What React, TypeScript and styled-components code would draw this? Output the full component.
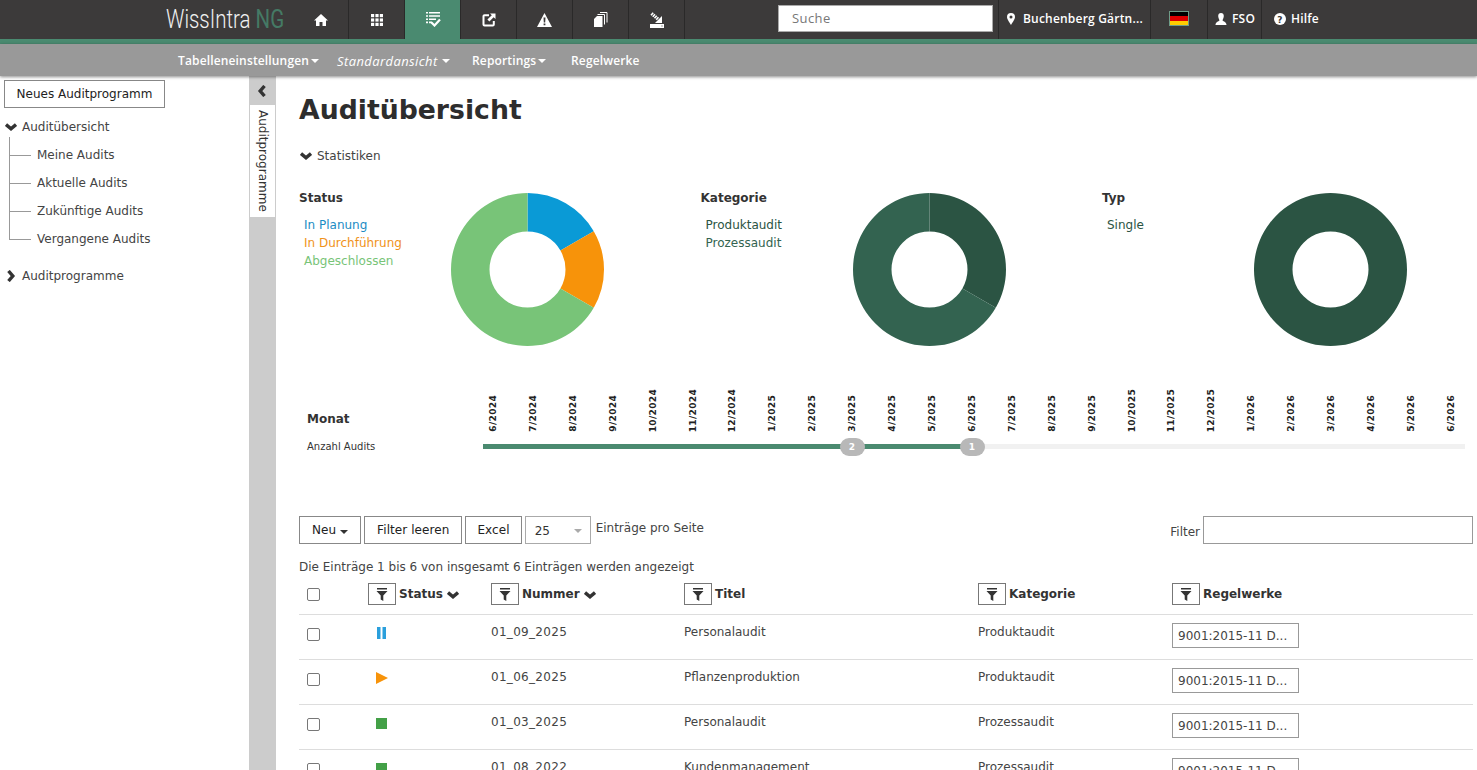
import React from "react";
import styled, { createGlobalStyle } from "styled-components";

const Global = createGlobalStyle`
  html, body { margin: 0; padding: 0; height: 100%; overflow: hidden; background: #fff; }
  body { font-family: "DejaVu Sans", Verdana, sans-serif; font-size: 12px; color: #333; }
  * { box-sizing: border-box; }
`;

const Page = styled.div`display: flex; flex-direction: column; height: 770px; overflow: hidden;`;
const TopBar = styled.header`
  flex: none; height: 44px; display: flex; background: #3c3a3a; border-bottom: 5px solid #4a8a70; padding-left: 166px;
`;
const Logo = styled.div`
  width: 127px; font-family: Roboto, sans-serif; font-weight: 300; font-size: 25px; line-height: 39px; color: #f0f0f0; white-space: nowrap;
`;
const LogoText = styled.span`
  display: inline-block; transform: scaleX(0.82); transform-origin: left center;
  span { color: #457a65; font-weight: 400; }
`;
const NavCell = styled.div<{ $active?: boolean }>`
  width: 56px; display: flex; align-items: center; justify-content: center;
  border-right: 1px solid #2a2929; color: #fff;
  background: ${(p) => (p.$active ? "#4a8a70" : "transparent")};
`;
const Spacer = styled.div`width: 93px;`;
const Search = styled.input`
  width: 215px; height: 27px; margin: 5px 5px 0 0; padding: 0 13px 2px; border: 1px solid #aaa; background: #fff;
  font: 13px "Open Sans", sans-serif; letter-spacing: .4px; outline: none;
  &::placeholder { color: #777; opacity: 1; }
`;
const MetaCell = styled.div<{ $w: number; $pad?: number; $gap?: number }>`
  width: ${(p) => p.$w}px; display: flex; align-items: center; gap: ${(p) => p.$gap ?? 5}px; padding: 0 0 2px ${(p) => p.$pad ?? 8}px;
  border-left: 1px solid #2a2929; color: #fff; font: 600 12px "Open Sans", sans-serif; letter-spacing: .2px; white-space: nowrap;
`;
const Flag = styled.div`
  width: 20px; height: 15px; margin-left: 10px; border: 1px solid #6f9c88;
  background: linear-gradient(#000 0 33%, #d00 33% 66%, #fc0 66%);
`;
const SubBar = styled.nav`
  flex: none; height: 32px; background: #999; display: flex; align-items: center; padding: 1px 0 0 178px;
  color: #fff; font: 600 12px "Open Sans", sans-serif; letter-spacing: .15px; box-shadow: 0 1px 3px rgba(0,0,0,.45); position: relative; z-index: 2;
`;
const SubItem = styled.span<{ $w: number }>`
  width: ${(p) => p.$w}px; white-space: nowrap; display: flex; align-items: center;
`;
const SubItemItalic = styled(SubItem)`
  font-style: italic; font-weight: 400; font-size: 13px; letter-spacing: .4px;
`;
const Caret = styled.i<{ $c?: string; $gap?: number }>`
  display: inline-block; margin-left: ${(p) => p.$gap ?? 2}px; width: 0; height: 0;
  border-left: 4px solid transparent; border-right: 4px solid transparent; border-top: 4px solid ${(p) => p.$c ?? "#fff"};
`;
const Body = styled.div`flex: 1; display: flex; min-height: 0;`;
const Sidebar = styled.aside`width: 249px; flex: none; padding: 4px;`;
const Btn = styled.button`
  height: 28px; padding: 0 12px 1px; border: 1px solid #888; background: #fff; color: #222;
  font: 12px "DejaVu Sans", sans-serif; letter-spacing: .08px; white-space: nowrap;
`;
const TightBtn = styled(Btn)`padding: 0 11px 1px;`;
const NewBtn = styled(Btn)`width: 161px; padding: 0 0 1px; letter-spacing: 0;`;
const TreeHead = styled.div<{ $mt: number }>`
  margin-top: ${(p) => p.$mt}px; height: 20px; display: flex; align-items: center; gap: 5px; padding-left: 1px; color: #444;
`;
const TreeList = styled.ul`
  list-style: none; margin: 0 0 0 5px; padding: 4px 0 0;
  background: linear-gradient(#999,#999) left top / 1px 5px no-repeat;
`;
const TreeItem = styled.li<{ $last?: boolean }>`
  height: 28px; line-height: 28px; padding-left: 28px; color: #444;
  background:
    linear-gradient(#999,#999) left top / 1px ${(p) => (p.$last ? "50%" : "100%")} no-repeat,
    linear-gradient(#999,#999) left center / 22px 1px no-repeat;
`;
const Rail = styled.div`
  width: 27px; flex: none; background: #ccc; display: flex; flex-direction: column; align-items: center;
`;
const RailToggle = styled.div`height: 29px; display: flex; align-items: center; justify-content: center; padding-right: 2px;`;
const RailTab = styled.div`
  width: 25px; height: 112px; align-self: flex-start; margin-left: 1px; background: #fff; writing-mode: vertical-rl; line-height: 25px; padding-top: 5px;
  color: #333; white-space: nowrap;
`;
const Main = styled.main`flex: 1; min-width: 0; padding: 15px 4px 0 23px;`;
const Title = styled.h1`margin: 0; font: 700 26.7px/37px "DejaVu Sans", sans-serif; color: #2d2d2d;`;
const Toggle = styled.div`margin-top: 18px; height: 20px; display: flex; align-items: center; gap: 5px; padding-left: 1px; color: #444;`;
const Charts = styled.section`display: flex; margin-top: 22px; height: 160px;`;
const ChartBox = styled.div`width: 401.5px; display: flex; flex: none;`;
const Legend = styled.div`width: 152px; flex: none; margin-top: 1px;`;
const LegendTitle = styled.div`font-weight: 700; line-height: 18px; color: #333;`;
const LegendList = styled.div`margin: 9px 0 0 5px;`;
const LegendItem = styled.div<{ $c: string }>`line-height: 18px; color: ${(p) => p.$c};`;
const DonutWrap = styled.div`margin-top: 5px;`;
const Timeline = styled.section`margin-top: 34px; padding-left: 8px;`;
const MonthRow = styled.div`display: flex; height: 50px; align-items: flex-end;`;
const MonthHead = styled.div`width: 166px; font-weight: 700; line-height: 18px; color: #333; margin-bottom: 4px;`;
const MonthCell = styled.div`
  width: 39.92px; flex: none; display: flex;
  writing-mode: vertical-rl; transform: rotate(180deg); font: 700 9px/10px "DejaVu Sans", sans-serif; color: #222; letter-spacing: .35px;
  align-items: center; justify-content: flex-start;
`;
const CountRow = styled.div`display: flex; align-items: center; margin-top: 4px; height: 20px;`;
const CountLabel = styled.div`width: 176px; font-size: 10px; color: #333;`;
const Track = styled.div`width: 982px; height: 5px; background: #f1f1f1; position: relative;`;
const Fill = styled.div<{ $w: number }>`width: ${(p) => p.$w}px; height: 100%; background: #4a8a70;`;
const Bubble = styled.span<{ $left: number }>`
  position: absolute; top: -6px; left: ${(p) => p.$left}px; width: 25px; height: 18px; margin-left: -12.5px; border-radius: 9px;
  background: #b8b8b8; color: #fff; font: 700 9px/18px "DejaVu Sans", sans-serif; text-align: center;
`;
const Tools = styled.section`display: flex; align-items: center; margin-top: 60px; height: 28px; gap: 3px;`;
const Select = styled.div`
  width: 66px; height: 28px; border: 1px solid #aaa; display: flex; align-items: center; justify-content: space-between; padding: 2px 8px 0 9px; color: #333;
`;
const PerPage = styled.span`margin-left: 2px; margin-top: -4px; color: #444;`;
const FilterWrap = styled.label`margin-left: auto; display: flex; align-items: center; gap: 3px; color: #444;`;
const FilterText = styled.span`padding-top: 3px;`;
const FilterInput = styled.input`width: 270px; height: 28px; border: 1px solid #999; background: #fff; outline: none;`;
const Info = styled.div`margin-top: 14px; line-height: 18px; color: #444;`;
const Table = styled.table`width: 1174px; table-layout: fixed; border-collapse: collapse; margin-top: 1px;`;
const Th = styled.th<{ $w?: number }>`
  ${(p) => (p.$w ? `width: ${p.$w}px;` : "")} height: 37px; padding: 6px 8px 0; border-bottom: 1px solid #ddd; text-align: left; vertical-align: top; font-weight: 700; color: #333;
`;
const HeadInner = styled.div`display: flex; align-items: flex-start; gap: 3px; white-space: nowrap;`;
const HeadLabel = styled.span`display: flex; align-items: center; gap: 4px; line-height: 17px; padding-top: 1px;`;
const FilterBtn = styled.span`
  flex: none; width: 28px; height: 22px; border: 1px solid #777; display: inline-flex; align-items: center; justify-content: center; background: #fff;
`;
const Td = styled.td`
  height: 45px; padding: 9px 8px 0; border-bottom: 1px solid #ddd; vertical-align: top; color: #444; line-height: 17px;
`;
const NumTd = styled(Td)`letter-spacing: .3px;`;
const Check = styled.span`
  display: block; width: 13px; height: 13px; border: 1px solid #777; border-radius: 2px; background: #fff;
`;
const HeadCheck = styled(Check)`margin-top: 5px;`;
const RowCheck = styled(Check)`margin-top: 4px;`;
const StatusCell = styled.div`display: flex; align-items: center; height: 17px; padding-left: 8px; margin-top: 1px;`;
const Chip = styled.div`
  width: 127px; height: 25px; margin-top: -1px; border: 1px solid #999; padding: 0 5px; line-height: 24px; color: #444; white-space: nowrap;
`;

const Chev = ({ dir, size = 12, c = "#333" }: { dir: "down" | "right" | "left"; size?: number; c?: string }) => {
  const d = dir === "down" ? "M1 3.5 L6 7.8 L11 3.5" : dir === "right" ? "M3.5 1 L7.8 6 L3.5 11" : "M8.500 1 L4.200 6 L8.500 11";
  return <svg width={size} height={size} viewBox="0 0 12 12"><path d={d} fill="none" stroke={c} strokeWidth="3.4" /></svg>;
};
const W = { fill: "#fff" };
const IHome = () => <svg width="14" height="14" viewBox="0 0 14 14"><path {...W} d="M7 1 L14 7.6 H12 V13 H8.500 V9 H5.500 V13 H2 V7.600 H0 Z" /></svg>;
const IGrid = () => <svg width="12" height="12" viewBox="0 0 12 12">{[0, 4.4, 8.8].flatMap((x) => [0, 4.4, 8.8].map((y) => <rect key={`${x}${y}`} {...W} x={x} y={y} width="3.2" height="3.2" />))}</svg>;
const IList = () => <svg width="16" height="15" viewBox="0 0 16 15"><path {...W} d="M1 0h2v1.600H1zM4 0h11v1.600H4zM1 3.200h2v1.600H1zM4 3.200h11v1.600H4zM1 6.400h2V8H1zM4 6.400h7V8H4zM1 9.600h2v1.600H1zM4 9.600h3v1.600H4z" /><path d="M6.500 10.500 L9.500 13.500 L15 7.500" fill="none" stroke="#fff" strokeWidth="2.2" /></svg>;
const IShare = () => <svg width="14" height="14" viewBox="0 0 14 14"><path d="M7 2.200H2.500a1 1 0 0 0-1 1v8.300a1 1 0 0 0 1 1h8.300a1 1 0 0 0 1-1V8" fill="none" stroke="#fff" strokeWidth="2" /><path {...W} d="M8 0.500h5.500V6L11.600 4.200 7.400 8.600 5.400 6.600 9.800 2.300z" /></svg>;
const IWarn = () => <svg width="15" height="14" viewBox="0 0 15 14"><path fillRule="evenodd" {...W} d="M7.500 0 L15 14 H0 Z M6.500 4.500 L6.800 9.500 H8.200 L8.500 4.500 Z M6.600 10.500 V12.200 H8.400 V10.500 Z" /></svg>;
const IDocs = () => <svg width="14" height="15" viewBox="0 0 14 15"><path {...W} d="M0 7 L3 4 H8.500 V15 H0 Z" /><path d="M3.500 2.500 H10.500 V12.500 M6 .5 H13 V10.500" fill="none" stroke="#fff" strokeWidth="1" /></svg>;
const IImport = () => <svg width="16" height="16" viewBox="0 0 16 16"><path fillRule="evenodd" {...W} d="M1 12h14v4H1zM12.500 13.500v1h1v-1z" /><path {...W} d="M13 11 V4 L6 11Z" /><path d="M2.500 1.500 L9.500 7.500" stroke="#fff" strokeWidth="3.400" strokeDasharray="1.600 .7" /></svg>;
const IPin = () => <svg width="8" height="12" viewBox="0 0 8 12"><path fillRule="evenodd" {...W} d="M4 0a4 4 0 0 1 4 4c0 2.500-3 6-4 8-1-2-4-5.500-4-8a4 4 0 0 1 4-4zm0 2.500a1.500 1.500 0 1 0 0 3 1.500 1.500 0 0 0 0-3z" /></svg>;
const IUser = () => <svg width="12" height="12" viewBox="0 0 12 12"><path {...W} d="M6 0c1.800 0 2.800 1.300 2.800 3S7.800 6.500 7.500 7.500C8.500 8.500 11.500 9 11.500 12H.5C.5 9 3.500 8.500 4.500 7.500 4.200 6.500 3.200 4.700 3.200 3S4.200 0 6 0z" /></svg>;
const IHelp = () => <svg width="12" height="12" viewBox="0 0 12 12"><circle cx="6" cy="6" r="6" fill="#fff" /><text x="6" y="9.500" textAnchor="middle" fontSize="9" fontWeight="700" fontFamily="DejaVu Sans" fill="#3c3a3a">?</text></svg>;
const IFilter = () => <svg width="12" height="13" viewBox="0 0 12 13"><path fill="#333" d="M1 0h10v1.500H1zM0.500 3h11L7.300 7.500V13L4.700 11.500V7.500z" /></svg>;
const IPause = () => <svg width="10" height="12" viewBox="-1 0 10 12"><path fill="#2a9fdc" d="M0 0h3.500v12H0zM5.500 0H9v12H5.500z" /></svg>;
const IPlay = () => <svg width="12" height="12" viewBox="0 0 12 12"><path fill="#f7930a" d="M0 0 L12 6 L0 12Z" /></svg>;
const IStop = () => <svg width="11" height="11" viewBox="0 0 11 11"><path fill="#43a047" d="M0 0h11v11H0z" /></svg>;

type Slice = { v: number; c: string };
const Donut = ({ data }: { data: Slice[] }) => {
  const total = data.reduce((s, d) => s + d.v, 0);
  const R = 76.5, r = 38, C = 76.5;
  const pt = (rad: number, a: number) => `${C + rad * Math.sin(a)} ${C - rad * Math.cos(a)}`;
  let acc = 0;
  return (
    <svg width="153" height="153" viewBox="0 0 153 153">
      {data.length === 1 ? (
        <path fillRule="evenodd" fill={data[0].c} d={`M${C} 0a${R} ${R} 0 1 1 -.01 0zM${C} ${C - r}a${r} ${r} 0 1 0 .01 0z`} />
      ) : data.map((d, i) => {
        const a0 = (acc / total) * 2 * Math.PI;
        acc += d.v;
        const a1 = (acc / total) * 2 * Math.PI;
        const large = a1 - a0 > Math.PI ? 1 : 0;
        return <path key={i} fill={d.c} d={`M${pt(R, a0)}A${R} ${R} 0 ${large} 1 ${pt(R, a1)}L${pt(r, a1)}A${r} ${r} 0 ${large} 0 ${pt(r, a0)}Z`} />;
      })}
    </svg>
  );
};

const months = ["6/2024","7/2024","8/2024","9/2024","10/2024","11/2024","12/2024","1/2025","2/2025","3/2025","4/2025","5/2025","6/2025","7/2025","8/2025","9/2025","10/2025","11/2025","12/2025","1/2026","2/2026","3/2026","4/2026","5/2026","6/2026"];
const dark = "#2b5443", mid = "#336350";
const charts = [
  { title: "Status", legend: [["In Planung", "#1b8cc4"], ["In Durchführung", "#f0921a"], ["Abgeschlossen", "#78c478"]], data: [{ v: 1, c: "#0a9ad6" }, { v: 1, c: "#f7930a" }, { v: 4, c: "#78c478" }] },
  { title: "Kategorie", legend: [["Produktaudit", dark], ["Prozessaudit", mid]], data: [{ v: 2, c: dark }, { v: 4, c: mid }] },
  { title: "Typ", legend: [["Single", dark]], data: [{ v: 1, c: dark }] },
];
const rows = [
  { s: <IPause />, n: "01_09_2025", t: "Personalaudit", k: "Produktaudit" },
  { s: <IPlay />, n: "01_06_2025", t: "Pflanzenproduktion", k: "Produktaudit" },
  { s: <IStop />, n: "01_03_2025", t: "Personalaudit", k: "Prozessaudit" },
  { s: <IStop />, n: "01_08_2022", t: "Kundenmanagement", k: "Prozessaudit" },
];

const HeadCell = ({ w, label, sort }: { w?: number; label: string; sort?: boolean }) => (
  <Th $w={w}>
    <HeadInner>
      <FilterBtn><IFilter /></FilterBtn>
      <HeadTitle>{label}{sort && <Chev dir="down" />}</HeadTitle>
    </HeadInner>
  </Th>
);
const HeadTitle = styled(HeadLabel)`padding-top: 3px;`;

export default function App() {
  return (
    <Page>
      <Global />
      <TopBar>
        <Logo><LogoText>WissIntra <span>NG</span></LogoText></Logo>
        <NavCell><IHome /></NavCell>
        <NavCell><IGrid /></NavCell>
        <NavCell $active><IList /></NavCell>
        <NavCell><IShare /></NavCell>
        <NavCell><IWarn /></NavCell>
        <NavCell><IDocs /></NavCell>
        <NavCell><IImport /></NavCell>
        <Spacer />
        <Search placeholder="Suche" />
        <MetaCell $w={152} $gap={8}><IPin />Buchenberg Gärtn...</MetaCell>
        <MetaCell $w={57}><Flag /></MetaCell>
        <MetaCell $w={54} $pad={7}><IUser />FSO</MetaCell>
        <MetaCell $w={70} $pad={12}><IHelp />Hilfe</MetaCell>
      </TopBar>
      <SubBar>
        <SubItem $w={159}>Tabelleneinstellungen<Caret /></SubItem>
        <SubItemItalic $w={135}>Standardansicht<Caret $gap={4} /></SubItemItalic>
        <SubItem $w={99}>Reportings<Caret /></SubItem>
        <SubItem $w={80}>Regelwerke</SubItem>
      </SubBar>
      <Body>
        <Sidebar>
          <NewBtn>Neues Auditprogramm</NewBtn>
          <TreeHead $mt={9}><Chev dir="down" />Auditübersicht</TreeHead>
          <TreeList>
            <TreeItem>Meine Audits</TreeItem>
            <TreeItem>Aktuelle Audits</TreeItem>
            <TreeItem>Zukünftige Audits</TreeItem>
            <TreeItem $last>Vergangene Audits</TreeItem>
          </TreeList>
          <TreeHead $mt={13}><Chev dir="right" />Auditprogramme</TreeHead>
        </Sidebar>
        <Rail>
          <RailToggle><Chev dir="left" /></RailToggle>
          <RailTab>Auditprogramme</RailTab>
        </Rail>
        <Main>
          <Title>Auditübersicht</Title>
          <Toggle><Chev dir="down" />Statistiken</Toggle>
          <Charts>
            {charts.map((c) => (
              <ChartBox key={c.title}>
                <Legend>
                  <LegendTitle>{c.title}</LegendTitle>
                  <LegendList>
                    {c.legend.map(([l, col]) => <LegendItem key={l} $c={col}>{l}</LegendItem>)}
                  </LegendList>
                </Legend>
                <DonutWrap><Donut data={c.data} /></DonutWrap>
              </ChartBox>
            ))}
          </Charts>
          <Timeline>
            <MonthRow>
              <MonthHead>Monat</MonthHead>
              {months.map((m) => <MonthCell key={m}>{m}</MonthCell>)}
            </MonthRow>
            <CountRow>
              <CountLabel>Anzahl Audits</CountLabel>
              <Track>
                <Fill $w={489} />
                <Bubble $left={369}>2</Bubble>
                <Bubble $left={489}>1</Bubble>
              </Track>
            </CountRow>
          </Timeline>
          <Tools>
            <Btn>Neu <Caret $c="#333" $gap={0} /></Btn>
            <Btn>Filter leeren</Btn>
            <TightBtn>Excel</TightBtn>
            <Select>25<Caret $c="#aaa" /></Select>
            <PerPage>Einträge pro Seite</PerPage>
            <FilterWrap><FilterText>Filter</FilterText><FilterInput /></FilterWrap>
          </Tools>
          <Info>Die Einträge 1 bis 6 von insgesamt 6 Einträgen werden angezeigt</Info>
          <Table>
            <thead>
              <tr>
                <Th $w={61}><HeadCheck /></Th>
                <HeadCell w={123} label="Status" sort />
                <HeadCell w={193} label="Nummer" sort />
                <HeadCell w={294} label="Titel" />
                <HeadCell w={194} label="Kategorie" />
                <HeadCell label="Regelwerke" />
              </tr>
            </thead>
            <tbody>
              {rows.map((r) => (
                <tr key={r.n}>
                  <Td><RowCheck /></Td>
                  <Td><StatusCell>{r.s}</StatusCell></Td>
                  <NumTd>{r.n}</NumTd>
                  <Td>{r.t}</Td>
                  <Td>{r.k}</Td>
                  <Td><Chip>9001:2015-11 D...</Chip></Td>
                </tr>
              ))}
            </tbody>
          </Table>
        </Main>
      </Body>
    </Page>
  );
}
